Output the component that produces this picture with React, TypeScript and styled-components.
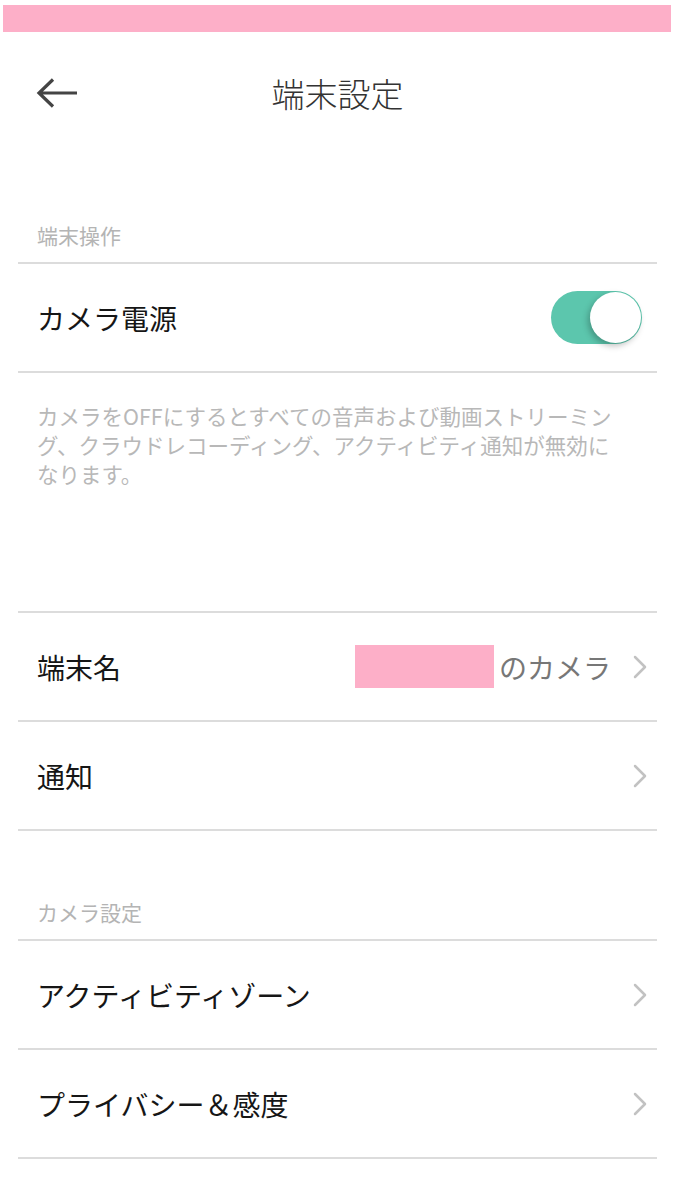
import React from "react";
import styled, { createGlobalStyle } from "styled-components";

const GlobalStyle = createGlobalStyle`
  body {
    margin: 0;
    background: #ffffff;
    font-family: "Noto Sans CJK JP", "Noto Sans", sans-serif;
    -webkit-font-smoothing: antialiased;
  }
`;

const Page = styled.div`
  width: 675px;
  background: #fff;
`;

const Banner = styled.div`
  margin: 5px 4px 0 3px;
  height: 27px;
  background: #fdafc8;
`;

const Header = styled.header`
  height: 122px;
  display: grid;
  grid-template-columns: 1fr auto 1fr;
  align-items: center;
`;

const BackButton = styled.button`
  justify-self: start;
  margin-left: 36px;
  padding: 0;
  border: 0;
  background: none;
  display: flex;
  align-items: center;
`;

const Title = styled.h1`
  margin: 0;
  font-size: 33px;
  font-weight: 300;
  color: #333;
  line-height: 1;
`;

const SectionLabel = styled.div`
  height: 108px;
  box-sizing: border-box;
  padding: 0 37px 13px;
  display: flex;
  align-items: flex-end;
  font-size: 21px;
  line-height: 28px;
  color: #b4b4b4;
`;

const Group = styled.div`
  margin: 0 18px;
  border-top: 2px solid #dcdcdc;
`;

const Row = styled.div`
  height: 109px;
  box-sizing: border-box;
  border-bottom: 2px solid #dcdcdc;
  display: flex;
  align-items: center;
  padding: 0 10px 0 19px;
`;

const Label = styled.span`
  flex: 1;
  font-size: 28px;
  color: #161616;
  line-height: 1;
`;

const Value = styled.span`
  display: flex;
  align-items: center;
  font-size: 28px;
  color: #777;
  margin-right: 22px;
`;

const Redaction = styled.span`
  display: inline-block;
  width: 139px;
  height: 43px;
  background: #fdafc8;
  margin-right: 5px;
`;

const Track = styled.div<{ $on: boolean }>`
  width: 91px;
  height: 53px;
  border-radius: 27px;
  background: ${(p) => (p.$on ? "#5cc6ad" : "#d0d0d0")};
  display: flex;
  align-items: center;
  justify-content: ${(p) => (p.$on ? "flex-end" : "flex-start")};
  margin-right: 5px;
`;

const Knob = styled.div`
  width: 51px;
  height: 51px;
  border-radius: 50%;
  background: #fff;
  margin: 0 1px;
  box-shadow: -2px 3px 6px rgba(0, 0, 0, 0.25);
`;

const Description = styled.p`
  margin: 0;
  height: 238px;
  box-sizing: border-box;
  padding: 28px 52px 0 37px;
  font-size: 21.5px;
  line-height: 29px;
  color: #b8b8b8;
`;

const Chevron = () => (
  <svg width="14" height="24" viewBox="0 0 14 24">
    <path
      d="M2 2 L12 12 L2 22"
      fill="none"
      stroke="#c2c2c2"
      strokeWidth="2.5"
      strokeLinecap="round"
      strokeLinejoin="round"
    />
  </svg>
);

const BackArrow = () => (
  <svg width="42" height="30" viewBox="0 0 42 30">
    <path
      d="M3 15 H41 M17 1.5 L3 15 L17 28.5"
      fill="none"
      stroke="#444"
      strokeWidth="3.2"
      strokeLinejoin="miter"
    />
  </svg>
);

interface LinkRowProps {
  label: string;
  value?: React.ReactNode;
}

const LinkRow = ({ label, value }: LinkRowProps) => (
  <Row>
    <Label>{label}</Label>
    {value ? <Value>{value}</Value> : null}
    <Chevron />
  </Row>
);

const App = () => (
  <Page>
    <GlobalStyle />
    <Banner />
    <Header>
      <BackButton aria-label="戻る">
        <BackArrow />
      </BackButton>
      <Title>端末設定</Title>
      <span />
    </Header>

    <SectionLabel>端末操作</SectionLabel>
    <Group>
      <Row>
        <Label>カメラ電源</Label>
        <Track $on>
          <Knob />
        </Track>
      </Row>
    </Group>
    <Description>
      カメラをOFFにするとすべての音声および動画ストリーミング、クラウドレコーディング、アクティビティ通知が無効になります。
    </Description>

    <Group>
      <LinkRow
        label="端末名"
        value={
          <>
            <Redaction />
            のカメラ
          </>
        }
      />
      <LinkRow label="通知" />
    </Group>

    <SectionLabel>カメラ設定</SectionLabel>
    <Group>
      <LinkRow label="アクティビティゾーン" />
      <LinkRow label="プライバシー＆感度" />
    </Group>
  </Page>
);

export default App;
